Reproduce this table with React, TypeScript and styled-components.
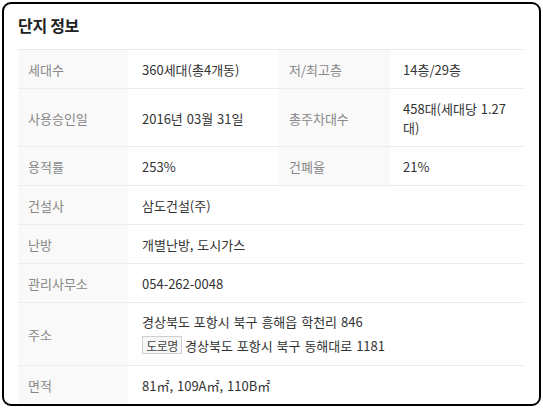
import styled, { createGlobalStyle } from "styled-components";

const GlobalStyle = createGlobalStyle`
  html, body {
    margin: 0;
    padding: 0;
    background: #fff;
  }
  body {
    font-family: "Noto Sans CJK KR", "Noto Sans", sans-serif;
  }
`;

const Frame = styled.div`
  box-sizing: border-box;
  margin: 2px;
  width: 539px;
  height: 404px;
  border: 2px solid #000;
  border-radius: 9px;
  padding: 10px 15px 0 14px;
  overflow: hidden;
`;

const Title = styled.h2`
  margin: 0 0 13px;
  font-size: 16px;
  line-height: 22px;
  font-weight: 700;
  color: #222;
  letter-spacing: -0.3px;
`;

const Table = styled.table`
  width: 506px;
  border-collapse: collapse;
  table-layout: fixed;
  border-top: 1px solid #e9e9e9;
  font-size: 13px;
  line-height: 19px;
  word-spacing: 1px;
`;

const Row = styled.tr`
  border-bottom: 1px solid #ececec;
`;

const Label = styled.th`
  box-sizing: border-box;
  padding: 10px 10px 9px;
  background: #f9f9f9;
  color: #888;
  font-weight: 400;
  text-align: left;
  vertical-align: middle;
`;

const Value = styled.td<{ $pl?: number }>`
  box-sizing: border-box;
  padding: 10px 12px 9px ${(p) => p.$pl ?? 14}px;
  color: #333;
  vertical-align: middle;
`;

const AddrCell = styled(Value)`
  padding-top: 9px;
  padding-bottom: 10px;
`;

const AddrLine = styled.div`
  display: flex;
  align-items: center;
  height: 19px;
  white-space: pre;
`;

const RoadLine = styled(AddrLine)`
  margin-top: 4px;
  height: 20px;
`;

const Badge = styled.span`
  display: inline-flex;
  align-items: center;
  justify-content: center;
  box-sizing: border-box;
  width: 40px;
  height: 18px;
  margin-right: 3px;
  border: 1px solid #cfcfcf;
  background: #f7f7f7;
  color: #444;
  font-size: 12px;
  letter-spacing: -0.5px;
`;

export default function App() {
  return (
    <>
      <GlobalStyle />
      <Frame>
        <Title>단지 정보</Title>
        <Table>
          <colgroup>
            <col style={{ width: 110 }} />
            <col style={{ width: 151 }} />
            <col style={{ width: 111 }} />
            <col style={{ width: 134 }} />
          </colgroup>
          <tbody>
            <Row>
              <Label>세대수</Label>
              <Value>360세대(총4개동)</Value>
              <Label>저/최고층</Label>
              <Value $pl={13}>14층/29층</Value>
            </Row>
            <Row>
              <Label>사용승인일</Label>
              <Value>2016년 03월 31일</Value>
              <Label>총주차대수</Label>
              <Value $pl={13}>458대(세대당 1.27 대)</Value>
            </Row>
            <Row>
              <Label>용적률</Label>
              <Value>253%</Value>
              <Label>건폐율</Label>
              <Value $pl={13}>21%</Value>
            </Row>
            <Row>
              <Label>건설사</Label>
              <Value colSpan={3}>삼도건설(주)</Value>
            </Row>
            <Row>
              <Label>난방</Label>
              <Value colSpan={3}>개별난방, 도시가스</Value>
            </Row>
            <Row>
              <Label>관리사무소</Label>
              <Value colSpan={3}>054-262-0048</Value>
            </Row>
            <Row>
              <Label>주소</Label>
              <AddrCell colSpan={3}>
                <AddrLine>경상북도 포항시 북구 흥해읍 학천리 846</AddrLine>
                <RoadLine>
                  <Badge>도로명</Badge>
                  경상북도 포항시 북구 동해대로 1181
                </RoadLine>
              </AddrCell>
            </Row>
            <Row>
              <Label>면적</Label>
              <Value colSpan={3}>81㎡, 109A㎡, 110B㎡</Value>
            </Row>
          </tbody>
        </Table>
      </Frame>
    </>
  );
}
